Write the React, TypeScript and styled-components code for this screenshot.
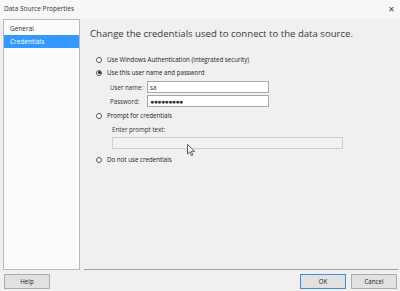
import React, { useState } from "react";
import styled, { createGlobalStyle } from "styled-components";

const GlobalStyle = createGlobalStyle`
  html, body {
    margin: 0;
    padding: 0;
    background: #f0f0f0;
  }
  body {
    font-family: "Open Sans", "Noto Sans", "Liberation Sans", sans-serif;
    color: #1e1e1e;
  }
`;

const Window = styled.div`
  position: relative;
  width: 400px;
  height: 291px;
  background: #f0f0f0;
  display: flex;
  flex-direction: column;
  overflow: hidden;
`;

const TitleBar = styled.div`
  height: 19px;
  display: flex;
  align-items: center;
  justify-content: space-between;
  padding: 0 4px 3px 4px;
  box-sizing: border-box;
  background: #f7f7f7;
  font-size: 6.5px;
  color: #333;
`;

const CloseGlyph = styled.span`
  font-size: 8px;
  color: #444;
  padding-right: 1px;
`;

const Body = styled.div`
  flex: 1;
  display: flex;
  padding-left: 3px;
`;

const Sidebar = styled.div`
  width: 77px;
  height: 251px;
  background: #fbfbfb;
  border: 1px solid #b9b9b9;
  padding-top: 2px;
  box-sizing: border-box;
  display: flex;
  flex-direction: column;
`;

const NavItem = styled.div<{ $active?: boolean }>`
  height: 13px;
  display: flex;
  align-items: center;
  padding-left: 6px;
  font-size: 6.5px;
  background: ${({ $active }) => ($active ? "#3399ff" : "transparent")};
  color: ${({ $active }) => ($active ? "#fff" : "#333")};
`;

const Main = styled.div`
  flex: 1;
  height: 251px;
  margin-left: 4px;
  margin-right: 2px;
  border-bottom: 1px solid #a0a0a0;
  box-sizing: border-box;
  position: relative;
`;

const Heading = styled.div`
  font-size: 9.6px;
  color: #3a3a3a;
  padding: 8px 0 0 6px;
`;

const Options = styled.div`
  display: flex;
  flex-direction: column;
  padding: 13px 0 0 12px;
`;

const RadioRow = styled.label`
  display: flex;
  align-items: center;
  height: 13px;
  font-size: 6.2px;
  color: #222;
  gap: 5px;
`;

const RadioDot = styled.span<{ $checked?: boolean }>`
  width: 6px;
  height: 6px;
  border-radius: 50%;
  border: 1px solid #555;
  background: #fff;
  display: inline-flex;
  align-items: center;
  justify-content: center;
  box-sizing: border-box;
  flex-shrink: 0;
  &::after {
    content: "";
    width: 3px;
    height: 3px;
    border-radius: 50%;
    background: ${({ $checked }) => ($checked ? "#222" : "transparent")};
  }
`;

const FieldGrid = styled.div`
  display: grid;
  grid-template-columns: 37px 122px;
  row-gap: 2px;
  padding: 2px 0 2px 14px;
  align-items: center;
`;

const FieldLabel = styled.span`
  font-size: 6.2px;
  color: #333;
`;

const TextBox = styled.div<{ $disabled?: boolean }>`
  height: 12px;
  box-sizing: border-box;
  border: 1px solid ${({ $disabled }) => ($disabled ? "#cfcfcf" : "#a8a8a8")};
  background: ${({ $disabled }) => ($disabled ? "#f2f2f2" : "#fff")};
  font-size: 6.2px;
  display: flex;
  align-items: center;
  padding-left: 2px;
  color: #333;
`;

const Dots = styled.span`
  font-size: 7px;
  letter-spacing: -0.6px;
  line-height: 1;
`;

const PromptBlock = styled.div`
  display: flex;
  flex-direction: column;
  padding: 3px 0 4px 16px;
  gap: 3px;
`;

const PromptInput = styled(TextBox)`
  width: 231px;
`;

const Cursor = styled.svg`
  position: absolute;
  left: 103px;
  top: 125px;
`;

const Footer = styled.div`
  height: 21px;
  display: flex;
  align-items: flex-start;
  justify-content: space-between;
  padding: 4px 3px 0 4px;
  box-sizing: border-box;
`;

const ButtonGroup = styled.div`
  display: flex;
  gap: 5px;
`;

const Button = styled.button<{ $primary?: boolean }>`
  width: 46px;
  height: 15px;
  box-sizing: border-box;
  font-family: inherit;
  font-size: 6.2px;
  color: #222;
  background: #e1e1e1;
  border: 1px solid ${({ $primary }) => ($primary ? "#3c8fdc" : "#adadad")};
  padding: 0;
`;

const App: React.FC = () => {
  const [mode, setMode] = useState("userpass");

  const options = [
    { key: "windows", label: "Use Windows Authentication (integrated security)" },
    { key: "userpass", label: "Use this user name and password" },
  ];

  return (
    <>
      <GlobalStyle />
      <Window>
        <TitleBar>
          <span>Data Source Properties</span>
          <CloseGlyph>✕</CloseGlyph>
        </TitleBar>
        <Body>
          <Sidebar>
            <NavItem>General</NavItem>
            <NavItem $active>Credentials</NavItem>
          </Sidebar>
          <Main>
            <Heading>
              Change the credentials used to connect to the data source.
            </Heading>
            <Options>
              {options.map((o) => (
                <RadioRow key={o.key} onClick={() => setMode(o.key)}>
                  <RadioDot $checked={mode === o.key} />
                  {o.label}
                </RadioRow>
              ))}
              <FieldGrid>
                <FieldLabel>User name:</FieldLabel>
                <TextBox>sa</TextBox>
                <FieldLabel>Password:</FieldLabel>
                <TextBox>
                  <Dots>●●●●●●●●●</Dots>
                </TextBox>
              </FieldGrid>
              <RadioRow onClick={() => setMode("prompt")}>
                <RadioDot $checked={mode === "prompt"} />
                Prompt for credentials
              </RadioRow>
              <PromptBlock>
                <FieldLabel>Enter prompt text:</FieldLabel>
                <PromptInput $disabled />
              </PromptBlock>
              <RadioRow onClick={() => setMode("none")}>
                <RadioDot $checked={mode === "none"} />
                Do not use credentials
              </RadioRow>
            </Options>
            <Cursor width="9" height="13" viewBox="0 0 9 13">
              <path
                d="M0.5 0.5 L0.5 10 L2.8 7.8 L4.4 11.6 L5.8 11 L4.3 7.3 L7.6 7.3 Z"
                fill="#fff"
                stroke="#333"
                strokeWidth="0.8"
                strokeLinejoin="round"
              />
            </Cursor>
          </Main>
        </Body>
        <Footer>
          <Button>Help</Button>
          <ButtonGroup>
            <Button $primary>OK</Button>
            <Button>Cancel</Button>
          </ButtonGroup>
        </Footer>
      </Window>
    </>
  );
};

export default App;
